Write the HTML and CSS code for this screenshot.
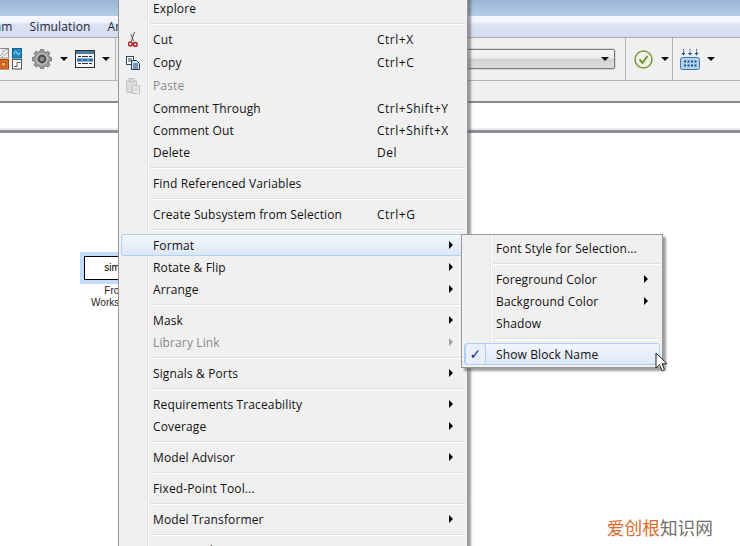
FILE: index.html
```html
<!DOCTYPE html>
<html lang="en">
<head>
<meta charset="utf-8">
<title>Simulink model context menu</title>
<link rel="stylesheet" href="styles.css">
</head>
<body>
<div class="app">
  <div class="titlebar"></div>
  <div class="menubar">
    <span class="mb-item mb-first">Diagram</span>
    <span class="mb-item">Simulation</span>
    <span class="mb-item">Analysis</span>
  </div>
  <div class="toolbar">
    <div class="tool-group tg-left">
      <svg class="lib-icon" width="22" height="22" viewBox="0 0 22 22">
        <rect x="-1.500" y=".5" width="10" height="9.500" fill="#efefef" stroke="#8a8a8a"/>
        <path d="M-1 9L3 5V2.500L8 1.500M2 9L8 4" fill="none" stroke="#a5a5a5"/>
        <rect x="12.500" y=".5" width="9" height="9.500" fill="#1e87c4" stroke="#15638f"/>
        <path d="M14 6 Q15.500 1.500 17 5 T20 4.500" fill="none" stroke="#cdeaf8"/>
        <rect x="-1.500" y="11.500" width="10" height="9.500" fill="#dd6a1e" stroke="#a84c10"/>
        <rect x="1.500" y="14.500" width="4" height="3.500" fill="#f3b071" stroke="#8c3f0a" stroke-width=".6"/>
        <rect x="12.500" y="11.500" width="9" height="9.500" fill="#f6f6f6" stroke="#555"/>
        <path d="M14 18.500H17V14.500H20.500" fill="none" stroke="#666"/>
      </svg>
      <svg class="gear" width="20" height="20" viewBox="0 0 20 20">
        <path d="M8.400 0.400h3.200l.5 2.300 1.700.7 2-1.300 2.200 2.200-1.300 2 .7 1.700 2.300.5v3.200l-2.300.5-.7 1.700 1.300 2-2.200 2.200-2-1.300-1.700.7-.5 2.300H8.400l-.5-2.300-1.700-.7-2 1.300-2.200-2.200 1.300-2-.7-1.700-2.300-.5V8.500l2.300-.5.7-1.700-1.300-2 2.200-2.200 2 1.300 1.700-.7z" fill="#9b9b9b" stroke="#5c5c5c" stroke-width=".7"/>
        <circle cx="10" cy="10" r="6" fill="#bdbdbd"/>
        <circle cx="10" cy="10" r="4.400" fill="#4a4a4a"/>
        <circle cx="10" cy="10" r="2.300" fill="#8f8f8f"/>
      </svg>
      <span class="caret"></span>
      <svg class="table" width="20" height="18" viewBox="0 0 20 18">
        <rect x=".5" y=".5" width="19" height="17" fill="#f6f6f6" stroke="#2e2e2e"/>
        <rect x="1" y="1" width="18" height="3" fill="#4d7b9c"/>
        <path d="M3 6.500h3M7 6.500h6M14 6.500h3M3 13.500h3M7 13.500h6M14 13.500h3" stroke="#333"/>
        <rect x="2" y="8.500" width="16" height="3" fill="#2470b8"/>
        <path d="M6.500 10h1M12.500 10h1" stroke="#fff"/>
      </svg>
      <span class="caret"></span>
    </div>
    <div class="tool-group tg-combo">
      <div class="combo"><span class="caret caret-combo"></span></div>
    </div>
    <div class="tool-group tg-check">
      <svg width="19" height="19" viewBox="0 0 19 19">
        <circle cx="9.500" cy="9.500" r="8.500" fill="#eef1ea" stroke="#7c9a3c" stroke-width="1.500"/>
        <path d="M5.500 9.500l3 3.500 5-7" fill="none" stroke="#6d9a2e" stroke-width="2"/>
      </svg>
      <span class="caret"></span>
    </div>
    <div class="tool-group tg-keys">
      <svg width="20" height="21" viewBox="0 0 20 21">
        <path d="M3.500 0v1.500M10 0v1.500M16.500 0v1.500" stroke="#1c4d7c"/>
        <path d="M3.500 2.500v2M10 2.500v2M16.500 2.500v2" stroke="#1c4d7c"/>
        <path d="M1.500 4h4l-2 2.500zM8 4h4l-2 2.500zM14.500 4h4l-2 2.500z" fill="#1c4d7c"/>
        <rect x=".5" y="8.500" width="19" height="12" rx="2" fill="#b3d3f0" stroke="#3a78b5"/>
        <path d="M4 12.500h2M7.500 12.500h2M11 12.500h2M14.500 12.500h2M4 16.500h2M7.500 16.500h2M11 16.500h2M14.500 16.500h2" stroke="#1f4f85" stroke-width="2"/>
      </svg>
      <span class="caret"></span>
    </div>
  </div>
  <div class="subbar"></div>
  <div class="pathbar"></div>
  <div class="canvas">
    <div class="block-wrap">
      <div class="block">simin</div>
      <div class="block-name">From<br>Workspace</div>
    </div>
  </div>
</div>

<div class="menu main-menu">
  <div class="item"><span class="label">Explore</span></div>
  <div class="sep"></div>
  <div class="item tall"><span class="ico">
    <svg width="10" height="15" viewBox="0 0 10 15">
      <path d="M6.500 0L3.200 9.500M2.800 2L5.800 9.500" stroke="#555" stroke-width="1" fill="none"/>
      <circle cx="2.300" cy="12" r="1.900" fill="none" stroke="#b01f28" stroke-width="1.500"/>
      <circle cx="7.300" cy="12.500" r="1.900" fill="none" stroke="#b01f28" stroke-width="1.500"/>
    </svg></span><span class="label">Cut</span><span class="key">Ctrl+X</span></div>
  <div class="item tall"><span class="ico">
    <svg width="14" height="14" viewBox="0 0 14 14">
      <rect x=".5" y=".5" width="7" height="8" fill="#fff" stroke="#33465c"/>
      <path d="M2 3h4M2 5h4" stroke="#33465c"/>
      <path d="M5.500 4.500h5l3 3v6h-8z" fill="#d9e6f2" stroke="#1f3f66"/>
      <path d="M7 8h5M7 10h5M7 12h5" stroke="#1f3f66"/>
    </svg></span><span class="label">Copy</span><span class="key">Ctrl+C</span></div>
  <div class="item tall off"><span class="ico">
    <svg width="14" height="16" viewBox="0 0 14 16">
      <rect x=".5" y="2.500" width="10" height="12" rx="1" fill="#dcdcdc" stroke="#c4c4c4"/>
      <rect x="3" y=".5" width="5" height="3" fill="#ddd" stroke="#c4c4c4"/>
      <path d="M6.500 7.500h7v8h-7z" fill="#ededed" stroke="#c4c4c4"/>
      <path d="M8 10h4M8 12h4" stroke="#c8c8c8"/>
    </svg></span><span class="label">Paste</span><span class="key"></span></div>
  <div class="item"><span class="label">Comment Through</span><span class="key">Ctrl+Shift+Y</span></div>
  <div class="item"><span class="label">Comment Out</span><span class="key">Ctrl+Shift+X</span></div>
  <div class="item"><span class="label">Delete</span><span class="key">Del</span></div>
  <div class="sep"></div>
  <div class="item"><span class="label">Find Referenced Variables</span></div>
  <div class="sep"></div>
  <div class="item"><span class="label">Create Subsystem from Selection</span><span class="key">Ctrl+G</span></div>
  <div class="sep"></div>
  <div class="item sub hot"><span class="label">Format</span></div>
  <div class="item sub"><span class="label">Rotate &amp; Flip</span></div>
  <div class="item sub"><span class="label">Arrange</span></div>
  <div class="sep"></div>
  <div class="item sub"><span class="label">Mask</span></div>
  <div class="item sub off"><span class="label">Library Link</span></div>
  <div class="sep"></div>
  <div class="item sub"><span class="label">Signals &amp; Ports</span></div>
  <div class="sep"></div>
  <div class="item sub"><span class="label">Requirements Traceability</span></div>
  <div class="item sub"><span class="label">Coverage</span></div>
  <div class="sep"></div>
  <div class="item sub"><span class="label">Model Advisor</span></div>
  <div class="sep"></div>
  <div class="item"><span class="label">Fixed-Point Tool...</span></div>
  <div class="sep"></div>
  <div class="item sub"><span class="label">Model Transformer</span></div>
  <div class="sep"></div>
  <div class="item sub"><span class="label">C/C++ Code</span></div>
</div>

<div class="menu sub-menu">
  <div class="item"><span class="label">Font Style for Selection...</span></div>
  <div class="sep"></div>
  <div class="item sub"><span class="label">Foreground Color</span></div>
  <div class="item sub"><span class="label">Background Color</span></div>
  <div class="item"><span class="label">Shadow</span></div>
  <div class="sep"></div>
  <div class="item hot checked"><span class="ico check">✓</span><span class="label">Show Block Name</span></div>
</div>

<svg class="cursor" width="14" height="21" viewBox="0 0 14 21">
  <path d="M1 1v15l3.500-3.300 2.500 6 2.500-1-2.500-5.900h5z" fill="#fff" stroke="#222" stroke-width="1"/>
</svg>

<div class="watermark"><span class="wm-a">爱创根</span><span class="wm-b">知识网</span></div>
</body>
</html>
```
FILE: styles.css
```css
* { box-sizing: border-box; }
html, body { margin: 0; height: 100%; }
body {
  position: relative;
  width: 740px;
  height: 546px;
  overflow: hidden;
  background: #fff;
  font-family: "Open Sans", "Noto Sans", sans-serif;
  font-size: 12px;
  letter-spacing: .13px;
  color: #111;
}
.app { display: flex; flex-direction: column; height: 546px; }
.titlebar {
  height: 16px;
  background: linear-gradient(#9ab6d3, #b3cde8);
}
.menubar {
  height: 22px;
  display: flex;
  gap: 17px;
  background: linear-gradient(#f6f8fd 0, #eef1fa 7px, #dde2f3 8px, #d6dcf0 100%);
  border-bottom: 1px solid #a9a9a9;
  overflow: hidden;
}
.mb-item { white-space: nowrap; color: #1a2a3c; line-height: 16px; padding-top: 3px; height: 21px; flex: none; }
.mb-first { margin-left: -36px; }
.toolbar {
  height: 43px;
  display: flex;
  background: #f0f0f0;
  border-bottom: 1px solid #b4b4b4;
}
.tool-group { display: flex; align-items: center; border-right: 1px solid #b4b4b4; flex: none; }
.tool-group svg { flex: none; }
.tg-left { width: 116px; justify-content: flex-end; padding-right: 5px; }
.lib-icon { margin-right: 10px; }
.gear { margin-right: 8px; }
.table { margin: 0 7px; }
.tg-combo { width: 510px; }
.combo {
  width: 494px;
  height: 20px;
  margin-left: auto;
  margin-right: 10px;
  border: 1px solid #7a7a7a;
  border-radius: 2px;
  box-shadow: 0 0 0 1px #d6d6d6;
  background: linear-gradient(#f4f4f4 0, #ececec 45%, #d2d2d2 50%, #dcdcdc 100%);
  display: flex;
  align-items: center;
  justify-content: flex-end;
  padding-right: 5px;
}
.tg-check { width: 47px; padding-left: 8px; gap: 8px; }
.tg-keys { border-right: 0; padding-left: 7px; gap: 7px; }
.caret {
  display: inline-block;
  flex: none;
  width: 0;
  height: 0;
  border-left: 4px solid transparent;
  border-right: 4px solid transparent;
  border-top: 4px solid #111;
}
.subbar {
  height: 22px;
  background: #f0f0f0;
  border-bottom: 2px solid #8b8b8b;
}
.pathbar {
  height: 30px;
  background: #fff;
  border-bottom: 3px solid #8e8e96;
  box-shadow: inset 0 -2px 0 #ececec;
}
.canvas { flex: 1; position: relative; background: #fff; }
.block-wrap {
  position: absolute;
  left: 80px;
  top: 119px;
  width: 72px;
  display: flex;
  flex-direction: column;
  align-items: center;
  letter-spacing: 0;
}
.block {
  width: 72px;
  height: 32px;
  border: 4px solid #c2dbf7;
  outline: 1px solid #000;
  outline-offset: -5px;
  background: #fff;
  font: 10px/24px "Liberation Sans", sans-serif;
  color: #000;
  text-align: center;
}
.block-name {
  font: 10px/12px "Liberation Sans", sans-serif;
  color: #222;
  text-align: center;
  margin-top: 1px;
}
.menu {
  position: absolute;
  background: #f0f0f0;
  border: 1px solid #979797;
  box-shadow: 3px 3px 2px rgba(80, 80, 80, .55);
  padding: 2px;
}
.menu::before {
  content: "";
  position: absolute;
  top: 0;
  bottom: 0;
  width: 2px;
  background: linear-gradient(90deg, #e3e3e3 50%, #fff 50%);
}
.main-menu { left: 118px; top: -6px; width: 350px; }
.main-menu::before { left: 28px; }
.sub-menu { left: 461px; top: 234px; width: 202px; }
.sub-menu::before { left: 28px; }
.item {
  position: relative;
  height: 22px;
  display: flex;
  align-items: center;
  padding: 2px 0 0 31px;
  border: 1px solid transparent;
  border-radius: 3px;
  white-space: nowrap;
  line-height: 16px;
  color: #111;
}
.tall { height: 23px; padding-top: 0; }
.label { width: 224px; flex: none; }
.sub-menu .label { width: auto; }
.key { flex: none; letter-spacing: .5px; }
.off { color: #8a8a8a; }
.ico {
  position: absolute;
  left: 2px;
  top: 0;
  bottom: 0;
  width: 18px;
  display: flex;
  align-items: center;
  justify-content: center;
}
.sub::after {
  content: "";
  position: absolute;
  right: 11px;
  top: 6px;
  border-top: 4px solid transparent;
  border-bottom: 4px solid transparent;
  border-left: 4px solid #000;
}
.off.sub::after { border-left-color: #a0a0a0; }
.hot {
  background: linear-gradient(#f3f6fc, #dde7f5);
  border-color: #aecff7;
}
.sep {
  height: 9px;
  margin-left: 29px;
  padding-top: 4px;
}
.sep::after {
  content: "";
  display: block;
  height: 2px;
  background: linear-gradient(#e0e0e0 50%, #fff 50%);
}
.check {
  width: 21px;
  left: 0;
  top: -1px;
  bottom: -1px;
  border: 1px solid #aecff7;
  border-radius: 3px;
  background: #e8eff9;
  color: #1c2a9c;
  font-family: "DejaVu Sans", sans-serif;
  font-size: 14px;
  font-weight: bold;
}
.cursor { position: absolute; left: 655px; top: 352px; }
.watermark {
  position: absolute;
  right: 27px;
  bottom: 9px;
  font: 17.7px/20px "Noto Sans CJK SC", sans-serif;
  letter-spacing: 0;
  white-space: nowrap;
}
.wm-a { color: #e06a2c; }
.wm-b { color: #6e6e6e; }
```
